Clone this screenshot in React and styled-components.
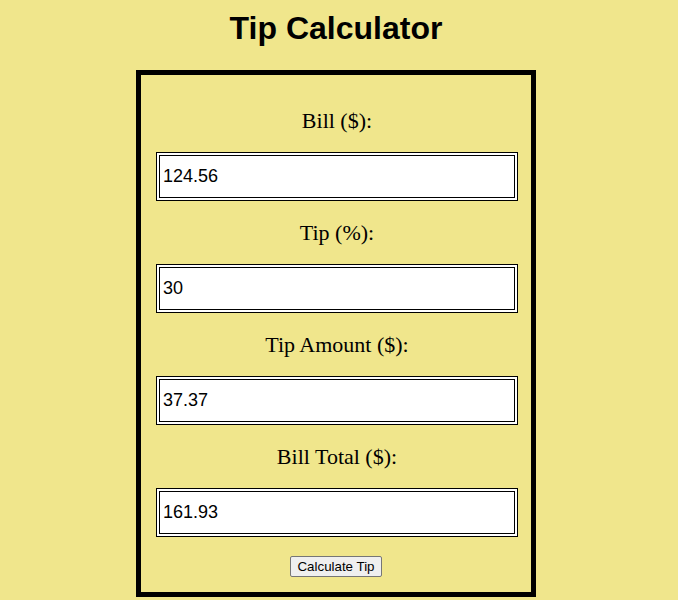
import React, { useState } from "react";
import styled, { createGlobalStyle } from "styled-components";

const Global = createGlobalStyle`
  html, body {
    margin: 0;
    padding: 0;
    background: #f0e68c;
  }
`;

const Page = styled.div`
  display: flex;
  flex-direction: column;
  align-items: center;
  padding-right: 6px;
`;

const Title = styled.h1`
  margin: 10px 0 23px;
  font-family: "Liberation Sans", Arial, sans-serif;
  font-size: 32px;
  line-height: 37px;
  font-weight: bold;
  color: #000;
  text-align: center;
`;

const Card = styled.form`
  box-sizing: border-box;
  width: 400px;
  border: 5px solid #000;
  padding: 14px 0 15px;
  display: flex;
  flex-direction: column;
  align-items: center;
`;

const Label = styled.label`
  display: block;
  margin: 20px 0 20px;
  font-family: "Liberation Serif", "Times New Roman", serif;
  font-size: 22px;
  line-height: 23px;
  color: #000;
  text-align: center;
`;

const Field = styled.div`
  display: flex;
  flex-direction: column;
  align-items: center;
  margin-left: 2px;
`;

const Input = styled.input`
  box-sizing: border-box;
  width: 362px;
  height: 49px;
  border: 4px double #000;
  background: #fff;
  padding: 0 3px;
  font-family: "Liberation Sans", Arial, sans-serif;
  font-size: 18px;
  color: #000;
  outline: none;
`;

const Button = styled.button`
  margin-top: 19px;
  height: 21px;
  padding: 1px 6px;
  font-family: "Liberation Sans", Arial, sans-serif;
  font-size: 13.33px;
  color: #000;
  background: #efefef;
  border: 1px solid #767676;
  border-radius: 2px;
`;

export default function App() {
  const [bill, setBill] = useState("124.56");
  const [tip, setTip] = useState("30");
  const [amount, setAmount] = useState("37.37");
  const [total, setTotal] = useState("161.93");

  const calc = (e) => {
    e.preventDefault();
    const b = parseFloat(bill) || 0;
    const t = parseFloat(tip) || 0;
    const a = (b * t) / 100;
    setAmount(a.toFixed(2));
    setTotal((b + a).toFixed(2));
  };

  return (
    <Page>
      <Global />
      <Title>Tip Calculator</Title>
      <Card onSubmit={calc}>
        <Field>
          <Label htmlFor="bill">Bill ($):</Label>
          <Input id="bill" value={bill} onChange={(e) => setBill(e.target.value)} />
        </Field>
        <Field>
          <Label htmlFor="tip">Tip (%):</Label>
          <Input id="tip" value={tip} onChange={(e) => setTip(e.target.value)} />
        </Field>
        <Field>
          <Label htmlFor="amount">Tip Amount ($):</Label>
          <Input id="amount" value={amount} readOnly />
        </Field>
        <Field>
          <Label htmlFor="total">Bill Total ($):</Label>
          <Input id="total" value={total} readOnly />
        </Field>
        <Button type="submit">Calculate Tip</Button>
      </Card>
    </Page>
  );
}
